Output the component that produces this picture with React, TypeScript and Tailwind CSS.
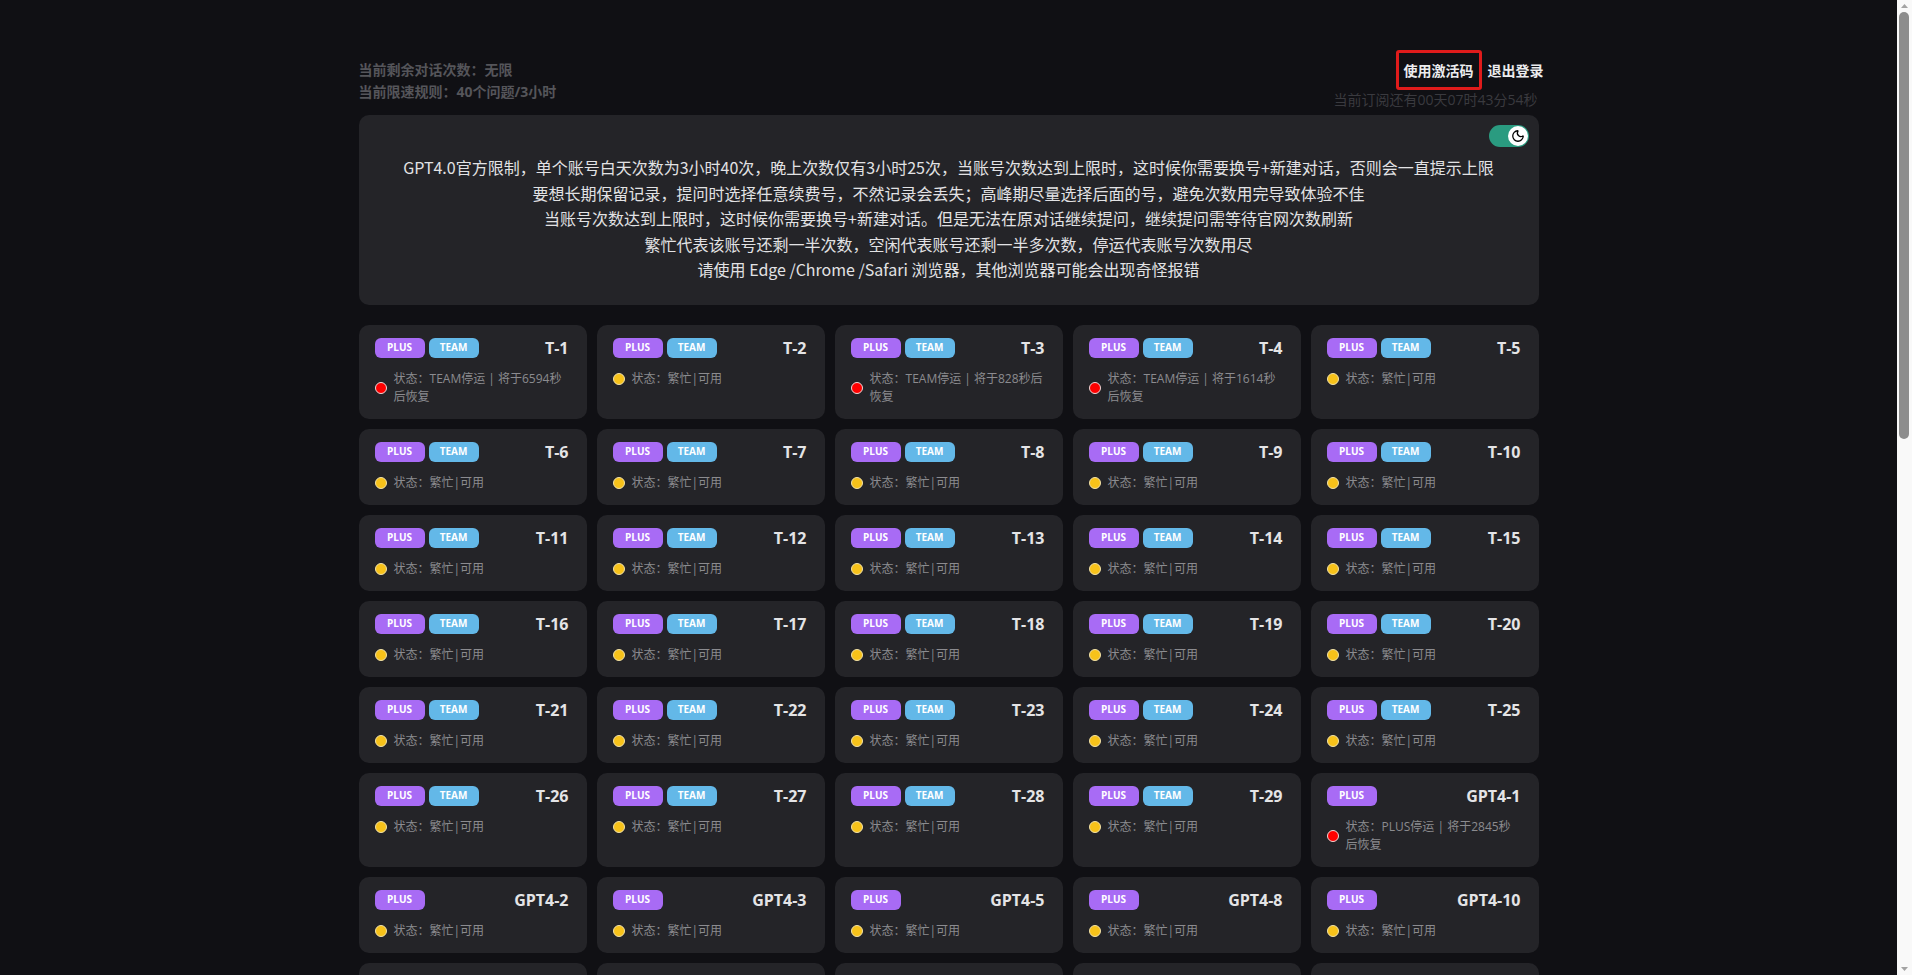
import { Moon } from "lucide-react"

type Account = {
    name: string
    team: boolean
    stopped?: string
}

const teamAccounts: Account[] = Array.from({ length: 29 }, (_, i) => ({
    name: `T-${ i + 1 }`,
    team: true,
}))
teamAccounts[0].stopped = "TEAM停运 | 将于6594秒后恢复"
teamAccounts[2].stopped = "TEAM停运 | 将于828秒后恢复"
teamAccounts[3].stopped = "TEAM停运 | 将于1614秒后恢复"

const gptNames = [
    "GPT4-1", "GPT4-2", "GPT4-3", "GPT4-5", "GPT4-8", "GPT4-10",
    "GPT4-11", "GPT4-12", "GPT4-13", "GPT4-15", "GPT4-16",
    "GPT4-17", "GPT4-18", "GPT4-19", "GPT4-20", "GPT4-21",
    "GPT4-22", "GPT4-23", "GPT4-25", "GPT4-26", "GPT4-27",
    "GPT4-28", "GPT4-29", "GPT4-30", "GPT4-31", "GPT4-32",
    "GPT4-33", "GPT4-35", "GPT4-36", "GPT4-37", "GPT4-38",
    "GPT4-39", "GPT4-40", "GPT4-41", "GPT4-42", "GPT4-43",
    "GPT4-45", "GPT4-46", "GPT4-47", "GPT4-48", "GPT4-49",
    "GPT4-50", "GPT4-51", "GPT4-52", "GPT4-53", "GPT4-55",
    "GPT4-56", "GPT4-57", "GPT4-58", "GPT4-59", "GPT4-60",
    "GPT4-61", "GPT4-62", "GPT4-63", "GPT4-65", "GPT4-66",
    "GPT4-67", "GPT4-68", "GPT4-69", "GPT4-70", "GPT4-71",
    "GPT4-72", "GPT4-73", "GPT4-75", "GPT4-76", "GPT4-77",
]
const gptAccounts: Account[] = gptNames.map(name => ({ name, team: false }))
gptAccounts[0].stopped = "PLUS停运 | 将于2845秒后恢复"

const accounts = [...teamAccounts, ...gptAccounts]

const notice = [
    "GPT4.0官方限制，单个账号白天次数为3小时40次，晚上次数仅有3小时25次，当账号次数达到上限时，这时候你需要换号+新建对话，否则会一直提示上限",
    "要想长期保留记录，提问时选择任意续费号，不然记录会丢失；高峰期尽量选择后面的号，避免次数用完导致体验不佳",
    "当账号次数达到上限时，这时候你需要换号+新建对话。但是无法在原对话继续提问，继续提问需等待官网次数刷新",
    "繁忙代表该账号还剩一半次数，空闲代表账号还剩一半多次数，停运代表账号次数用尽",
    "请使用 Edge /Chrome /Safari 浏览器，其他浏览器可能会出现奇怪报错",
]

function AccountCard ({ account }: { account: Account }) {
    return (
        <div className="bg-[#242428] rounded-[10px] pl-4 pr-[18px] pt-[13px] pb-[13px] cursor-pointer">
            <div className="flex items-center justify-between h-5">
                <div className="flex items-center gap-1">
                    <span className="w-[50px] h-5 rounded-[6px] bg-[#a86bf5] text-white text-[10px] font-bold flex items-center justify-center">
                        PLUS
                    </span>
                    { account.team && (
                        <span className="w-[50px] h-5 rounded-[6px] bg-[#63b8e8] text-white text-[10px] font-bold flex items-center justify-center">
                            TEAM
                        </span>
                    ) }
                </div>
                <span className="text-[16px] font-bold text-[#e4e4e6] leading-5">{ account.name }</span>
            </div>

            <div className="mt-3 flex items-center gap-[7px]">
                { account.stopped ? (
                    <span className="w-3 h-3 shrink-0 rounded-full bg-[#ff0000] border border-[#f0d8d8]" />
                ) : (
                    <span className="w-3 h-3 shrink-0 rounded-full bg-[#f7c21a] border border-[#f3e2a8]" />
                ) }
                <p className="text-[12px] leading-[18px] text-[#8b8b8f]">
                    状态：{ account.stopped ?? "繁忙|可用" }
                </p>
            </div>
        </div>
    )
}

// browser scrollbar as seen in the screenshot
function Scrollbar () {
    return (
        <aside className="w-[15px] shrink-0 bg-[#f9f9f9] flex flex-col">
            <svg className="mx-auto mt-[4px]" width="7" height="4" viewBox="0 0 7 4">
                <path d="M3.5 0 L7 4 L0 4 Z" fill="#a3a3a3" />
            </svg>
            <div className="ml-[2px] mt-[4px] w-[10px] h-[427px] rounded-full bg-[#8d8d8d]" />
            <svg className="mx-auto mt-auto mb-[4px]" width="7" height="4" viewBox="0 0 7 4">
                <path d="M0 0 L7 0 L3.5 4 Z" fill="#a3a3a3" />
            </svg>
        </aside>
    )
}

export default function App () {
    return (
        <div
            className="flex h-screen bg-[#101014]"
            style={ { fontFamily: '"Open Sans", "Noto Sans CJK SC", sans-serif' } }
        >
            <main className="flex-1 min-w-0 overflow-y-auto">
                <div className="w-[1180px] mx-auto pt-[50px] pb-10">
                    {/* Header */ }
                    <header className="flex justify-between items-start">
                        <div className="pt-[9px] text-[14px] leading-[22px] font-bold text-[#55555a]">
                            <p>当前剩余对话次数：无限</p>
                            <p>当前限速规则：40个问题/3小时</p>
                        </div>

                        <div className="flex flex-col items-end -mr-[5px]">
                            <div className="flex items-center gap-[6px]">
                                <button className="h-[40px] px-[5px] border-[3px] border-[#e01b1b] rounded-[3px] text-[14px] font-bold text-[#ececee]">
                                    使用激活码
                                </button>
                                <button className="text-[14px] font-bold text-[#ececee]">退出登录</button>
                            </div>
                            <p className="mr-[6px] text-[14px] leading-5 text-[#3a3a3f]">
                                当前订阅还有00天07时43分54秒
                            </p>
                        </div>
                    </header>

                    {/* Notice */ }
                    <section className="mt-[5px] bg-[#242428] rounded-[10px] pt-[10px] pr-[10px] pb-[22px] pl-[10px]">
                        <div className="flex justify-end">
                            <div className="w-10 h-[22px] rounded-full bg-[#2a9b80] flex items-center justify-end pr-[1px]">
                                <span className="w-5 h-5 rounded-full bg-white flex items-center justify-center">
                                    <Moon className="w-[14px] h-[14px] text-black" strokeWidth={ 2.2 } />
                                </span>
                            </div>
                        </div>
                        <div className="mt-2 text-center text-[16px] leading-[1.6] text-[#e2e2e4]" style={ { fontFamily: '"Noto Sans CJK SC", "Open Sans", sans-serif' } }>
                            { notice.map(line => (
                                <p key={ line }>{ line }</p>
                            )) }
                        </div>
                    </section>

                    {/* Accounts */ }
                    <section className="mt-5 grid grid-cols-5 gap-[10px]">
                        { accounts.map(account => (
                            <AccountCard key={ account.name } account={ account } />
                        )) }
                    </section>
                </div>
            </main>
            <Scrollbar />
        </div>
    )
}
